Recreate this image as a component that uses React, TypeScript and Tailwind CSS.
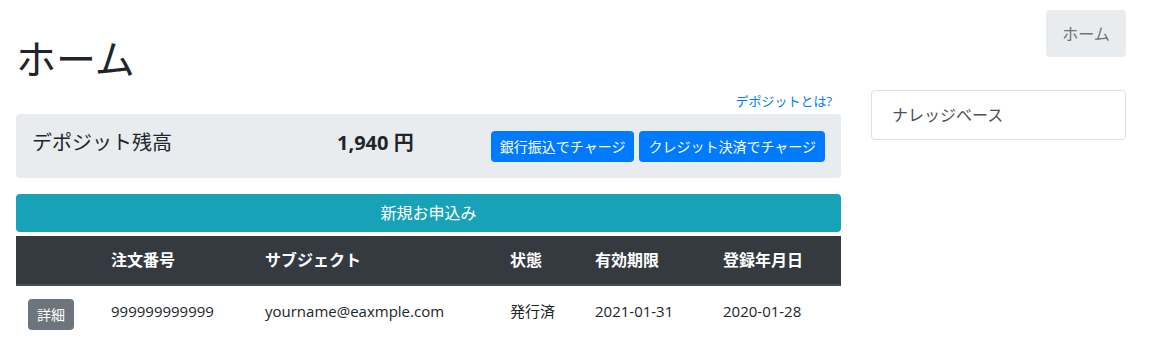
import React from 'react';

const font = { fontFamily: '"Open Sans", "Noto Sans CJK JP", sans-serif' };

const columns = [
  { label: '', width: 'w-[83px]' },
  { label: '注文番号', width: 'w-[154px]' },
  { label: 'サブジェクト', width: 'w-[245px]' },
  { label: '状態', width: 'w-[85px]' },
  { label: '有効期限', width: 'w-[128px]' },
  { label: '登録年月日', width: 'w-[130px]' },
];

const orders = [
  {
    id: '999999999999',
    subject: 'yourname@eaxmple.com',
    status: '発行済',
    expires: '2021-01-31',
    created: '2020-01-28',
  },
];

export default function App() {
  return (
    <div
      className="flex h-[363px] w-[1153px] gap-[30px] bg-white pl-[16px] text-[16px] text-[#212529]"
      style={font}
    >
      {/* Main column */}
      <div className="flex w-[825px] flex-col">
        <h1 className="mt-[35px] text-[40px] font-normal leading-[48px]">ホーム</h1>

        <div className="mt-[8px] h-[20px] pr-[9px] text-right text-[13px] leading-[20px] text-[#007bff]">
          デポジットとは?
        </div>

        {/* Deposit balance */}
        <div className="mt-[3px] flex h-[64px] items-center rounded bg-[#e9ecef] px-4">
          <div className="mb-[6px] w-[305px] text-[20px] leading-[30px]">デポジット残高</div>
          <div className="mb-[6px] text-[20px] font-bold leading-[30px]">1,940 円</div>
          <div className="ml-auto flex gap-[5px]">
            <button className="h-[31px] rounded bg-[#007bff] px-[9px] text-[14px] leading-[21px] text-white">
              銀行振込でチャージ
            </button>
            <button className="h-[31px] rounded bg-[#007bff] px-[9px] text-[14px] leading-[21px] text-white">
              クレジット決済でチャージ
            </button>
          </div>
        </div>

        <button className="mt-4 h-[38px] w-full rounded bg-[#17a2b8] text-[16px] leading-[24px] text-white">
          新規お申込み
        </button>

        {/* Orders */}
        <table className="mt-1 w-full table-fixed border-collapse">
          <thead>
            <tr className="bg-[#343a40] text-white">
              {columns.map((col) => (
                <th
                  key={col.label || 'action'}
                  className={`${col.width} border-b-2 border-[#454d55] px-3 py-3 text-left font-bold leading-[24px]`}
                >
                  {col.label}
                </th>
              ))}
            </tr>
          </thead>
          <tbody>
            {orders.map((o) => (
              <tr key={o.id}>
                <td className="px-3 pb-3 pt-[13px] align-top">
                  <button className="block h-[31px] rounded bg-[#6c757d] px-[9px] text-[14px] leading-[21px] text-white">
                    詳細
                  </button>
                </td>
                <td className="px-3 pt-[13px] pb-3 align-top text-[15px] leading-[24px]">{o.id}</td>
                <td className="px-3 pt-[13px] pb-3 align-top text-[15px] leading-[24px]">{o.subject}</td>
                <td className="px-3 pt-[13px] pb-3 align-top text-[15px] leading-[24px]">{o.status}</td>
                <td className="px-3 pt-[13px] pb-3 align-top text-[15px] leading-[24px]">{o.expires}</td>
                <td className="px-3 pt-[13px] pb-3 align-top text-[15px] leading-[24px]">{o.created}</td>
              </tr>
            ))}
          </tbody>
        </table>
      </div>

      {/* Side column */}
      <div className="flex w-[255px] flex-col">
        <button className="mt-[10px] h-[47px] w-[80px] self-end rounded bg-[#e9ecef] text-[16px] text-[#6c757d]">
          ホーム
        </button>
        <div className="mt-[33px] h-[50px] rounded border border-[#dfdfdf] px-5 py-3 leading-[24px] text-[#495057]">
          ナレッジベース
        </div>
      </div>
    </div>
  );
}
